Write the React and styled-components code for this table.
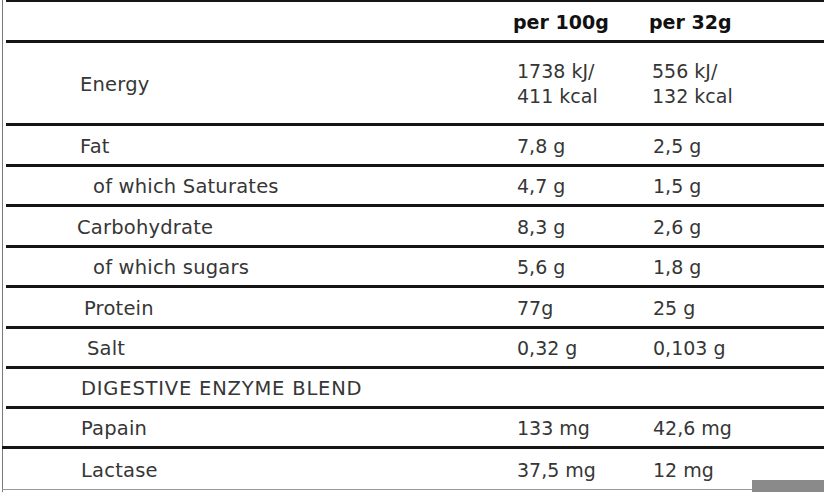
import React from "react";
import styled, { createGlobalStyle } from "styled-components";

const Global = createGlobalStyle`
  html, body { margin: 0; padding: 0; background: #fff; }
  body { width: 824px; height: 492px; overflow: hidden; }
`;

const Page = styled.div`
  position: relative;
  width: 824px;
  height: 492px;
  overflow: hidden;
  background: #fff;
`;

const Frame = styled.div`
  margin-left: 2px;
  margin-top: -1px;
  padding-left: 3px;
  border-left: 1px solid #7a7a7a;
  height: 493px;
  box-sizing: border-box;
  font-family: "DejaVu Sans", "Open Sans", sans-serif;
  color: #363636;
`;

const Row = styled.div`
  box-sizing: border-box;
  display: grid;
  grid-template-columns: 507px 136px 1fr;
  align-items: center;
  height: ${(p) => p.$h}px;
  border-top: 3px solid #151515;
  border-bottom: ${(p) => (p.$last ? "1px solid #9a9a9a" : "0")};
  margin-left: ${(p) => (p.$full ? "-4px" : "0")};
  padding-left: ${(p) => (p.$full ? "4px" : "0")};
  padding-top: 2px;
`;

const Label = styled.div`
  padding-left: ${(p) => p.$indent}px;
  font-size: 19.5px;
  letter-spacing: ${(p) => (p.$caps ? "0.8px" : "0.2px")};
  white-space: nowrap;
`;

const Value = styled.div`
  padding-left: ${(p) => p.$pl ?? 4}px;
  font-size: 19px;
  line-height: 25px;
  white-space: nowrap;
`;

const HeadCell = styled.div`
  font-size: 19px;
  font-weight: 700;
  color: #111;
  white-space: nowrap;
`;

const Scrollbar = styled.div`
  position: absolute;
  right: 0;
  bottom: 0;
  width: 72px;
  height: 12px;
  background: #8a8a8a;
`;

const rows = [
  { label: "Fat", indent: 74, a: "7,8 g", b: "2,5 g", h: 41 },
  { label: "of which Saturates", indent: 87, a: "4,7 g", b: "1,5 g", h: 40 },
  { label: "Carbohydrate", indent: 71, a: "8,3 g", b: "2,6 g", h: 41 },
  { label: "of which sugars", indent: 87, a: "5,6 g", b: "1,8 g", h: 40 },
  { label: "Protein", indent: 78, a: "77g", b: "25 g", h: 41 },
  { label: "Salt", indent: 81, a: "0,32 g", b: "0,103 g", h: 40 },
  { label: "DIGESTIVE ENZYME BLEND", indent: 75, a: "", b: "", h: 40, caps: true },
  { label: "Papain", indent: 75, a: "133 mg", b: "42,6 mg", h: 40 },
  { label: "Lactase", indent: 75, a: "37,5 mg", b: "12 mg", h: 44, full: true, last: true },
];

export default function App() {
  return (
    <Page>
      <Global />
      <Frame>
        <Row $h={41}>
          <div />
          <HeadCell>per 100g</HeadCell>
          <HeadCell>per 32g</HeadCell>
        </Row>
        <Row $h={83}>
          <Label $indent={74}>Energy</Label>
          <Value>
            1738 kJ/
            <br />
            411 kcal
          </Value>
          <Value $pl={3}>
            556 kJ/
            <br />
            132 kcal
          </Value>
        </Row>
        {rows.map((r) => (
          <Row key={r.label} $h={r.h} $full={r.full} $last={r.last}>
            <Label $indent={r.indent} $caps={r.caps}>{r.label}</Label>
            <Value>{r.a}</Value>
            <Value>{r.b}</Value>
          </Row>
        ))}
      </Frame>
      <Scrollbar />
    </Page>
  );
}
